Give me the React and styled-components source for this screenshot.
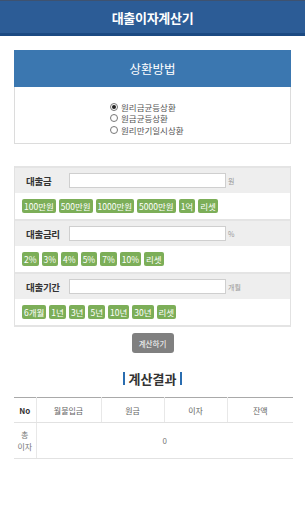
import React from "react";
import styled, { createGlobalStyle } from "styled-components";

const Global = createGlobalStyle`
  html, body { margin: 0; padding: 0; background: #fff; }
  body { font-family: "Noto Sans CJK KR", "Noto Sans", sans-serif; width: 305px; }
  * { box-sizing: border-box; }
`;

const Page = styled.div`
  width: 305px;
  min-height: 512px;
  background: #fff;
`;

const TopBar = styled.header`
  height: 36px;
  background: #2c5c96;
  border-top: 1px solid #3e5270;
  border-bottom: 3px solid #1c4a82;
  display: flex;
  align-items: center;
  justify-content: center;
  color: #fff;
  font-size: 13px;
  font-weight: 700;
  letter-spacing: -0.3px;
`;

const Content = styled.main`
  padding: 14px 14px 0;
  display: flex;
  flex-direction: column;
`;

const RepayBox = styled.section`
  border: 1px solid #dcdcdc;
  border-top: none;
`;

const RepayHead = styled.div`
  height: 37px;
  background: #3b77b0;
  color: #fff;
  font-size: 12.5px;
  display: flex;
  align-items: center;
  justify-content: center;
  margin: 0 -1px;
`;

const RepayBody = styled.div`
  height: 56px;
  padding: 14px 0 0 95px;
  display: flex;
  flex-direction: column;
`;

const RadioRow = styled.label`
  display: flex;
  align-items: center;
  gap: 3px;
  height: 11.5px;
  font-size: 8.5px;
  color: #555;
`;

const RadioDot = styled.span`
  width: 8px;
  height: 8px;
  border-radius: 50%;
  border: 1px solid #777;
  background: #fff;
  display: inline-flex;
  align-items: center;
  justify-content: center;
  &::after {
    content: "";
    width: 4px;
    height: 4px;
    border-radius: 50%;
    background: ${(p) => (p.$checked ? "#222" : "transparent")};
  }
`;

const Form = styled.section`
  margin-top: 22px;
  border-left: 1px solid #e2e2e2;
  border-right: 1px solid #e2e2e2;
  border-bottom: 2px solid #e4e4e4;
`;

const Block = styled.div`
  border-top: 2px solid #e4e4e4;
`;

const LabelRow = styled.div`
  height: 25px;
  background: #eeeeee;
  display: flex;
  align-items: center;
  padding-left: 11px;
`;

const Label = styled.span`
  width: 43px;
  font-size: 9.5px;
  font-weight: 700;
  color: #333;
  letter-spacing: -0.3px;
`;

const Input = styled.div`
  width: 157px;
  height: 15px;
  background: #fff;
  border: 1px solid #cfcfcf;
`;

const Unit = styled.span`
  margin-left: 2px;
  font-size: 7px;
  color: #999;
`;

const ButtonRow = styled.div`
  height: 26px;
  display: flex;
  align-items: center;
  gap: 3px;
  padding-left: 7px;
  background: #fff;
`;

const Chip = styled.span`
  height: 14px;
  padding: 0 2px;
  background: #7cae58;
  color: #fff;
  font-size: 8.5px;
  border-radius: 2px;
  display: inline-flex;
  align-items: center;
`;

const CalcWrap = styled.div`
  display: flex;
  justify-content: center;
  margin-top: 6px;
`;

const CalcButton = styled.button`
  width: 42px;
  height: 20px;
  border: none;
  border-radius: 3px;
  background: #808080;
  color: #fff;
  font-family: inherit;
  font-size: 7.5px;
  padding: 0;
`;

const ResultTitle = styled.h2`
  margin: 16px 0 0;
  text-align: center;
  font-size: 13px;
  font-weight: 700;
  color: #333;
  line-height: 19px;
  display: flex;
  justify-content: center;
  align-items: center;
  gap: 4px;
`;

const Bar = styled.span`
  width: 2px;
  height: 13px;
  background: #2a6db0;
`;

const Table = styled.table`
  margin-top: 9px;
  width: 279px;
  border-collapse: collapse;
  border-top: 1px solid #a9a9a9;
  font-size: 8px;
`;

const Th = styled.th`
  height: 25px;
  font-weight: ${(p) => (p.$bold ? 700 : 400)};
  color: ${(p) => (p.$bold ? "#333" : "#666")};
  border-bottom: 1px solid #e2e2e2;
  border-left: ${(p) => (p.$first ? "none" : "1px solid #e8e8e8")};
  padding: 0;
  width: ${(p) => p.$w}px;
`;

const Td = styled.td`
  height: 36px;
  text-align: center;
  color: #777;
  border-bottom: 1px solid #e2e2e2;
  border-left: ${(p) => (p.$first ? "none" : "1px solid #e8e8e8")};
  line-height: 12px;
  padding: 0;
`;

const rows = [
  { label: "대출금", unit: "원", chips: ["100만원", "500만원", "1000만원", "5000만원", "1억", "리셋"] },
  { label: "대출금리", unit: "%", chips: ["2%", "3%", "4%", "5%", "7%", "10%", "리셋"] },
  { label: "대출기간", unit: "개월", chips: ["6개월", "1년", "3년", "5년", "10년", "30년", "리셋"] },
];

export default function App() {
  return (
    <Page>
      <Global />
      <TopBar>대출이자계산기</TopBar>
      <Content>
        <RepayBox>
          <RepayHead>상환방법</RepayHead>
          <RepayBody>
            <RadioRow><RadioDot $checked />원리금균등상환</RadioRow>
            <RadioRow><RadioDot />원금균등상환</RadioRow>
            <RadioRow><RadioDot />원리만기일시상환</RadioRow>
          </RepayBody>
        </RepayBox>

        <Form>
          {rows.map((r) => (
            <Block key={r.label}>
              <LabelRow>
                <Label>{r.label}</Label>
                <Input />
                <Unit>{r.unit}</Unit>
              </LabelRow>
              <ButtonRow>
                {r.chips.map((c) => (
                  <Chip key={c}>{c}</Chip>
                ))}
              </ButtonRow>
            </Block>
          ))}
        </Form>

        <CalcWrap>
          <CalcButton>계산하기</CalcButton>
        </CalcWrap>

        <ResultTitle>
          <Bar />계산결과<Bar />
        </ResultTitle>

        <Table>
          <thead>
            <tr>
              <Th $bold $first $w={22}>No</Th>
              <Th $w={65}>월불입금</Th>
              <Th $w={63}>원금</Th>
              <Th $w={63}>이자</Th>
              <Th $w={66}>잔액</Th>
            </tr>
          </thead>
          <tbody>
            <tr>
              <Td $first>총<br />이자</Td>
              <Td colSpan={4}>0</Td>
            </tr>
          </tbody>
        </Table>
      </Content>
    </Page>
  );
}
